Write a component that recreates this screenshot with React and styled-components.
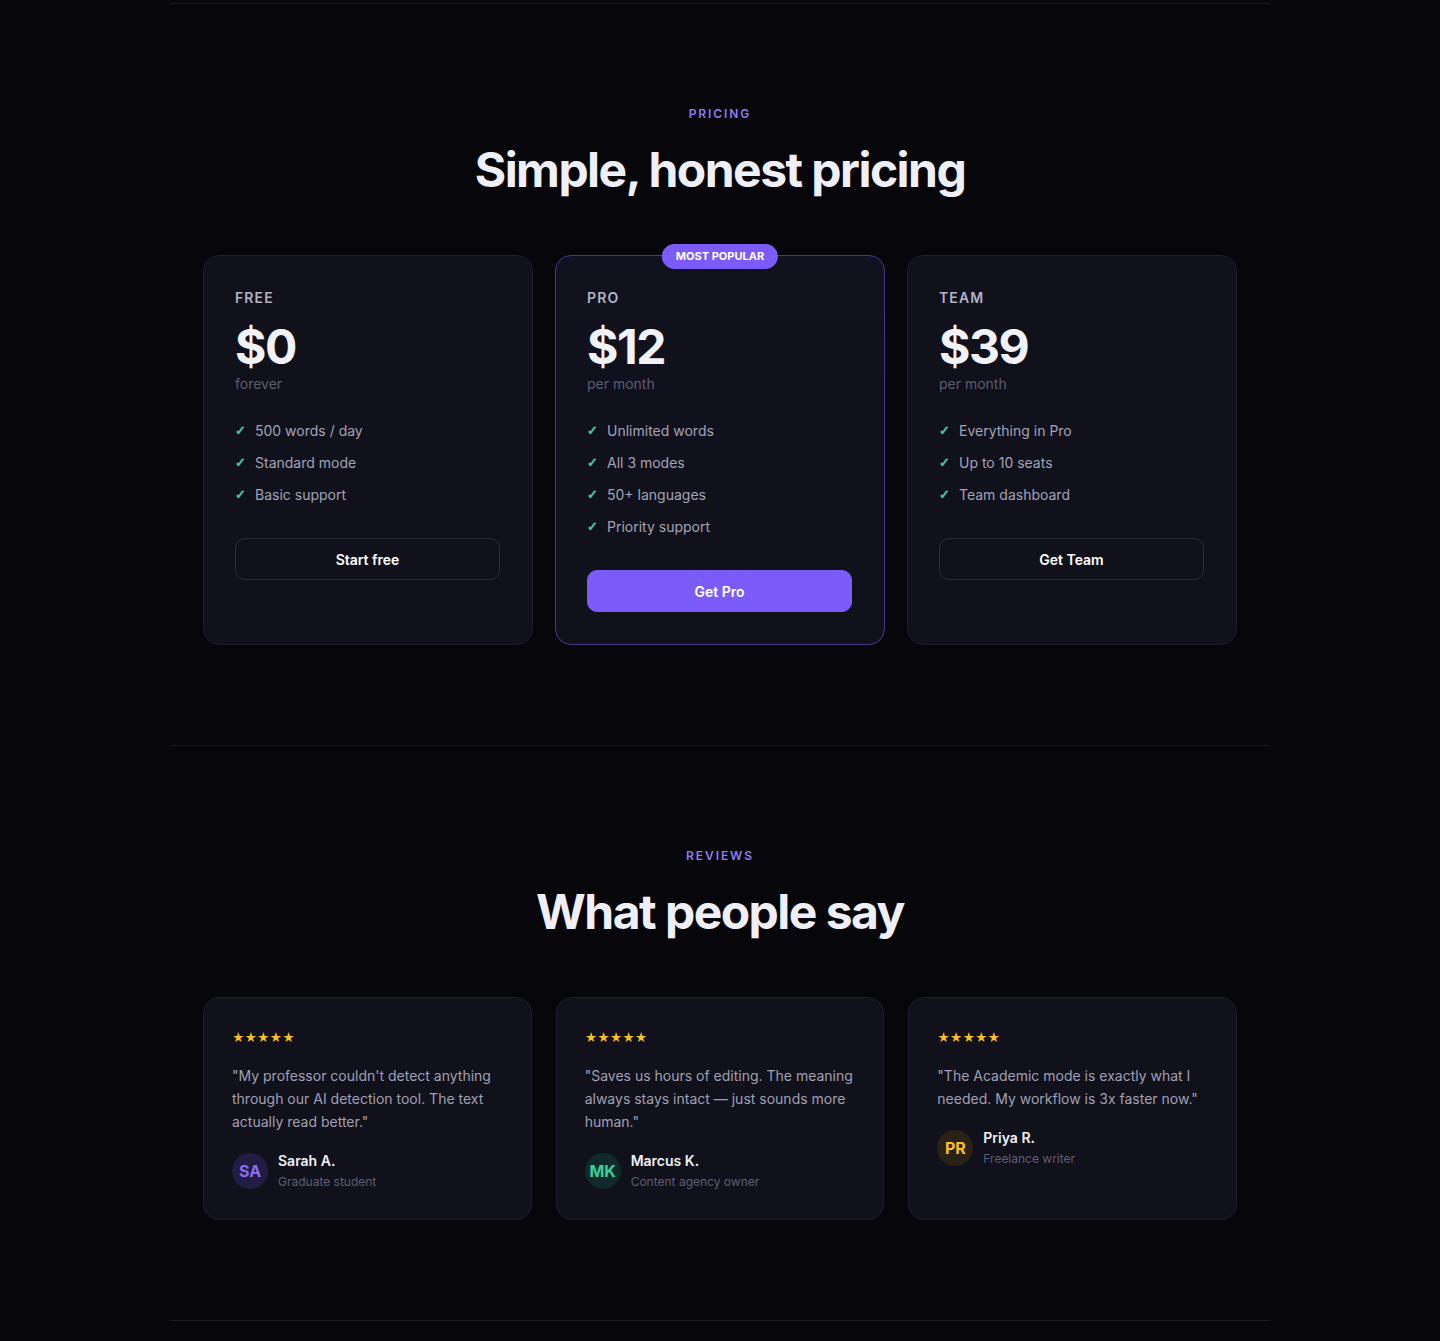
import React from "react";
import styled, { createGlobalStyle } from "styled-components";

const GlobalStyle = createGlobalStyle`
  html, body {
    margin: 0;
    padding: 0;
    background: #07070b;
  }
  body {
    font-family: Inter, "Noto Sans", "Liberation Sans", sans-serif;
    color: #ececf4;
    -webkit-font-smoothing: antialiased;
  }
`;

const plans = [
  {
    name: "FREE",
    price: "$0",
    period: "forever",
    features: ["500 words / day", "Standard mode", "Basic support"],
    cta: "Start free",
  },
  {
    name: "PRO",
    price: "$12",
    period: "per month",
    features: ["Unlimited words", "All 3 modes", "50+ languages", "Priority support"],
    cta: "Get Pro",
    popular: true,
  },
  {
    name: "TEAM",
    price: "$39",
    period: "per month",
    features: ["Everything in Pro", "Up to 10 seats", "Team dashboard"],
    cta: "Get Team",
  },
];

const reviews = [
  {
    quote: "\"My professor couldn't detect anything through our AI detection tool. The text actually read better.\"",
    name: "Sarah A.",
    role: "Graduate student",
    initials: "SA",
    tone: "violet",
  },
  {
    quote: "\"Saves us hours of editing. The meaning always stays intact — just sounds more human.\"",
    name: "Marcus K.",
    role: "Content agency owner",
    initials: "MK",
    tone: "green",
  },
  {
    quote: "\"The Academic mode is exactly what I needed. My workflow is 3x faster now.\"",
    name: "Priya R.",
    role: "Freelance writer",
    initials: "PR",
    tone: "amber",
  },
];

const avatarTones = {
  violet: { bg: "#231c44", fg: "#8b6cf7" },
  green: { bg: "#10292a", fg: "#34d399" },
  amber: { bg: "#2a2216", fg: "#fbbf24" },
};

const App = () => {
  return (
    <>
      <GlobalStyle />
      <Page>
        <Section>
          <Eyebrow>PRICING</Eyebrow>
          <Heading>Simple, honest pricing</Heading>
          <PlanGrid>
            {plans.map((plan) => (
              <PlanCard key={plan.name} $popular={plan.popular}>
                {plan.popular && <Badge>MOST POPULAR</Badge>}
                <PlanName>{plan.name}</PlanName>
                <Price>{plan.price}</Price>
                <Period>{plan.period}</Period>
                <FeatureList>
                  {plan.features.map((f) => (
                    <Feature key={f}>
                      <Check>✓</Check>
                      {f}
                    </Feature>
                  ))}
                </FeatureList>
                <PlanButton $primary={plan.popular}>{plan.cta}</PlanButton>
              </PlanCard>
            ))}
          </PlanGrid>
        </Section>

        <Section>
          <Eyebrow>REVIEWS</Eyebrow>
          <Heading>What people say</Heading>
          <ReviewGrid>
            {reviews.map((r) => (
              <ReviewCard key={r.name}>
                <Stars>★★★★★</Stars>
                <Quote>{r.quote}</Quote>
                <Author>
                  <Avatar $tone={r.tone}>{r.initials}</Avatar>
                  <AuthorText>
                    <AuthorName>{r.name}</AuthorName>
                    <AuthorRole>{r.role}</AuthorRole>
                  </AuthorText>
                </Author>
              </ReviewCard>
            ))}
          </ReviewGrid>
        </Section>
        <EndRule />
      </Page>
    </>
  );
};

const Page = styled.div`
  width: 1100px;
  margin: 0 auto;
  padding-top: 3px;
  min-height: 1338px;
`;

const Section = styled.section`
  border-top: 1px solid #1a1a24;
  padding: 100px 0 100px;
  display: flex;
  flex-direction: column;
  align-items: center;
`;

const EndRule = styled.div`
  border-top: 1px solid #1a1a24;
  height: 20px;
`;

const Eyebrow = styled.div`
  font-size: 12px;
  line-height: 18px;
  font-weight: 600;
  letter-spacing: 0.16em;
  color: #8d7cf4;
  margin-top: 1px;
`;

const Heading = styled.h2`
  margin: 20px 0 59px;
  font-size: 48px;
  line-height: 53px;
  font-weight: 700;
  letter-spacing: -0.032em;
  color: #efeff7;
`;

const PlanGrid = styled.div`
  width: 1034px;
  display: grid;
  grid-template-columns: repeat(3, 1fr);
  gap: 22px;
`;

const PlanCard = styled.div`
  position: relative;
  display: flex;
  flex-direction: column;
  padding: 32px 32px 32px 31px;
  border-radius: 16px;
  border: 1px solid ${(p) => (p.$popular ? "#43398c" : "#1d1e2b")};
  background: ${(p) =>
    p.$popular
      ? "linear-gradient(180deg, #12111f 0%, #10111b 70%)"
      : "#10111b"};
`;

const Badge = styled.div`
  position: absolute;
  top: -12px;
  left: 50%;
  transform: translateX(-50%);
  padding: 0 14px;
  height: 25px;
  line-height: 25px;
  border-radius: 999px;
  background: #7b5cfa;
  color: #ffffff;
  font-size: 11px;
  font-weight: 700;
  white-space: nowrap;
`;

const PlanName = styled.div`
  font-size: 14px;
  line-height: 20px;
  font-weight: 600;
  letter-spacing: 0.08em;
  color: #b3b3c6;
  margin-bottom: 12px;
`;

const Price = styled.div`
  font-size: 48px;
  line-height: 53px;
  font-weight: 700;
  letter-spacing: -0.03em;
  color: #f1f1f8;
`;

const Period = styled.div`
  font-size: 14px;
  line-height: 20px;
  color: #5d5d70;
  margin-top: 1px;
`;

const FeatureList = styled.ul`
  list-style: none;
  margin: 26px 0 32px;
  padding: 0;
  display: flex;
  flex-direction: column;
  gap: 10px;
`;

const Feature = styled.li`
  display: flex;
  align-items: center;
  gap: 10px;
  font-size: 14px;
  line-height: 22px;
  color: #a3a3b8;
`;

const Check = styled.span`
  color: #34d399;
  font-family: "DejaVu Sans", sans-serif;
  font-size: 13px;
  font-weight: 700;
  -webkit-text-stroke: 0.7px #34d399;
  width: 10px;
`;

const PlanButton = styled.button`
  height: 42px;
  width: 100%;
  border-radius: 10px;
  font-family: inherit;
  font-size: 14px;
  font-weight: 600;
  cursor: pointer;
  color: #ffffff;
  border: 1px solid ${(p) => (p.$primary ? "#7b5cfa" : "#2a2b3a")};
  background: ${(p) => (p.$primary ? "#7b5cfa" : "transparent")};
`;

const ReviewGrid = styled.div`
  width: 1034px;
  display: grid;
  grid-template-columns: repeat(3, 1fr);
  gap: 24px;
`;

const ReviewCard = styled.div`
  padding: 30px 28px 28px 28px;
  border-radius: 16px;
  border: 1px solid #1d1e2b;
  background: #10111b;
`;

const Stars = styled.div`
  font-size: 12px;
  line-height: 20px;
  letter-spacing: 0px;
  color: #fbbf24;
`;

const Quote = styled.p`
  margin: 16px 0 18px;
  font-size: 14px;
  line-height: 23px;
  color: #a0a0b4;
`;

const Author = styled.div`
  display: flex;
  align-items: center;
  gap: 10px;
`;

const Avatar = styled.div`
  width: 36px;
  height: 36px;
  border-radius: 50%;
  display: flex;
  align-items: center;
  justify-content: center;
  font-size: 16px;
  font-weight: 700;
  background: ${(p) => avatarTones[p.$tone].bg};
  color: ${(p) => avatarTones[p.$tone].fg};
`;

const AuthorText = styled.div`
  display: flex;
  flex-direction: column;
  gap: 2px;
`;

const AuthorName = styled.div`
  font-size: 14px;
  line-height: 20px;
  font-weight: 600;
  color: #f0f0f7;
`;

const AuthorRole = styled.div`
  font-size: 12px;
  line-height: 18px;
  color: #5f5f73;
`;

export default App;
